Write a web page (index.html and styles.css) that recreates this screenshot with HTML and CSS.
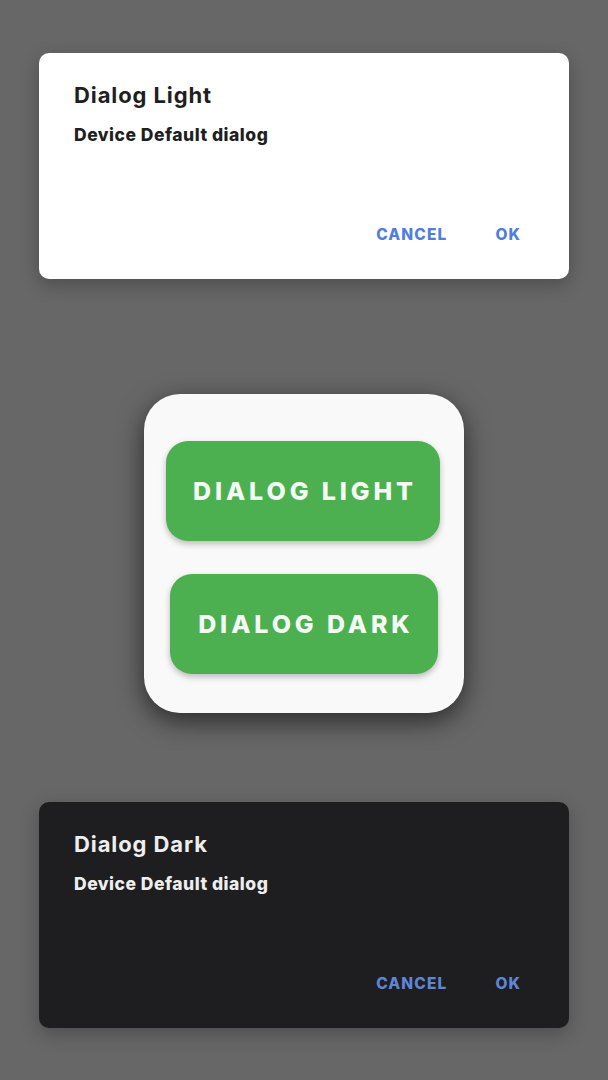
FILE: index.html
```html
<!DOCTYPE html>
<html>
<head>
<meta charset="utf-8">
<link rel="stylesheet" href="styles.css">
</head>
<body>
<main class="screen">
  <section class="dialog dialog-light">
    <h2 class="dialog-title">Dialog Light</h2>
    <p class="dialog-msg">Device Default dialog</p>
    <div class="dialog-actions">
      <span class="action">CANCEL</span>
      <span class="action">OK</span>
    </div>
  </section>

  <section class="card">
    <div class="btn btn-light">DIALOG LIGHT</div>
    <div class="btn btn-dark">DIALOG DARK</div>
  </section>

  <section class="dialog dialog-dark">
    <h2 class="dialog-title">Dialog Dark</h2>
    <p class="dialog-msg">Device Default dialog</p>
    <div class="dialog-actions">
      <span class="action">CANCEL</span>
      <span class="action">OK</span>
    </div>
  </section>
</main>
</body>
</html>
```
FILE: styles.css
```css
html, body {
  margin: 0;
  padding: 0;
  background: #676767;
}
body {
  width: 608px;
  height: 1080px;
  overflow: hidden;
  font-family: Inter, Lato, "Liberation Sans", sans-serif;
}
.screen {
  display: flex;
  flex-direction: column;
  align-items: center;
  padding-top: 53px;
}
.dialog {
  box-sizing: border-box;
  width: 530px;
  height: 226px;
  border-radius: 10px;
  padding: 28px 35px 0 35px;
  display: flex;
  flex-direction: column;
  box-shadow: 0 6px 18px rgba(0,0,0,0.25);
}
.dialog-light {
  background: #ffffff;
  color: #1f1f1f;
}
.dialog-dark {
  background: #1e1e20;
  color: #eeeeee;
  margin-top: 89px;
}
.dialog-title {
  margin: 0;
  font-size: 22px;
  font-weight: 700;
  line-height: 28px;
  letter-spacing: 0.9px;
}
.dialog-msg {
  margin: 15px 0 0 0;
  font-size: 17.5px;
  font-weight: 800;
  line-height: 22px;
  letter-spacing: 0.5px;
}
.dialog-actions {
  display: flex;
  justify-content: flex-end;
  gap: 48px;
  margin-top: 79px;
  padding-right: 13px;
}
.action {
  color: #4f7de0;
  font-size: 15.5px;
  font-weight: 800;
  letter-spacing: 1.1px;
}
.dialog-dark .action {
  color: #5f86d6;
}
.card {
  margin-top: 115px;
  box-sizing: border-box;
  width: 320px;
  height: 319px;
  background: #f9f9f9;
  border-radius: 36px;
  box-shadow: 0 8px 26px rgba(0,0,0,0.6);
  display: flex;
  flex-direction: column;
  align-items: center;
  padding-top: 47px;
  gap: 33px;
}
.btn {
  height: 100px;
  border-radius: 22px;
  background: #4caf50;
  color: #f4fbf4;
  display: flex;
  align-items: center;
  justify-content: center;
  font-size: 25px;
  font-weight: 800;
  letter-spacing: 3.9px;
  text-indent: 3.9px;
  box-shadow: 0 3px 6px rgba(0,0,0,0.25);
}
.btn-light {
  width: 274px;
  margin-left: -2px;
}
.btn-dark {
  width: 268px;
}
```
